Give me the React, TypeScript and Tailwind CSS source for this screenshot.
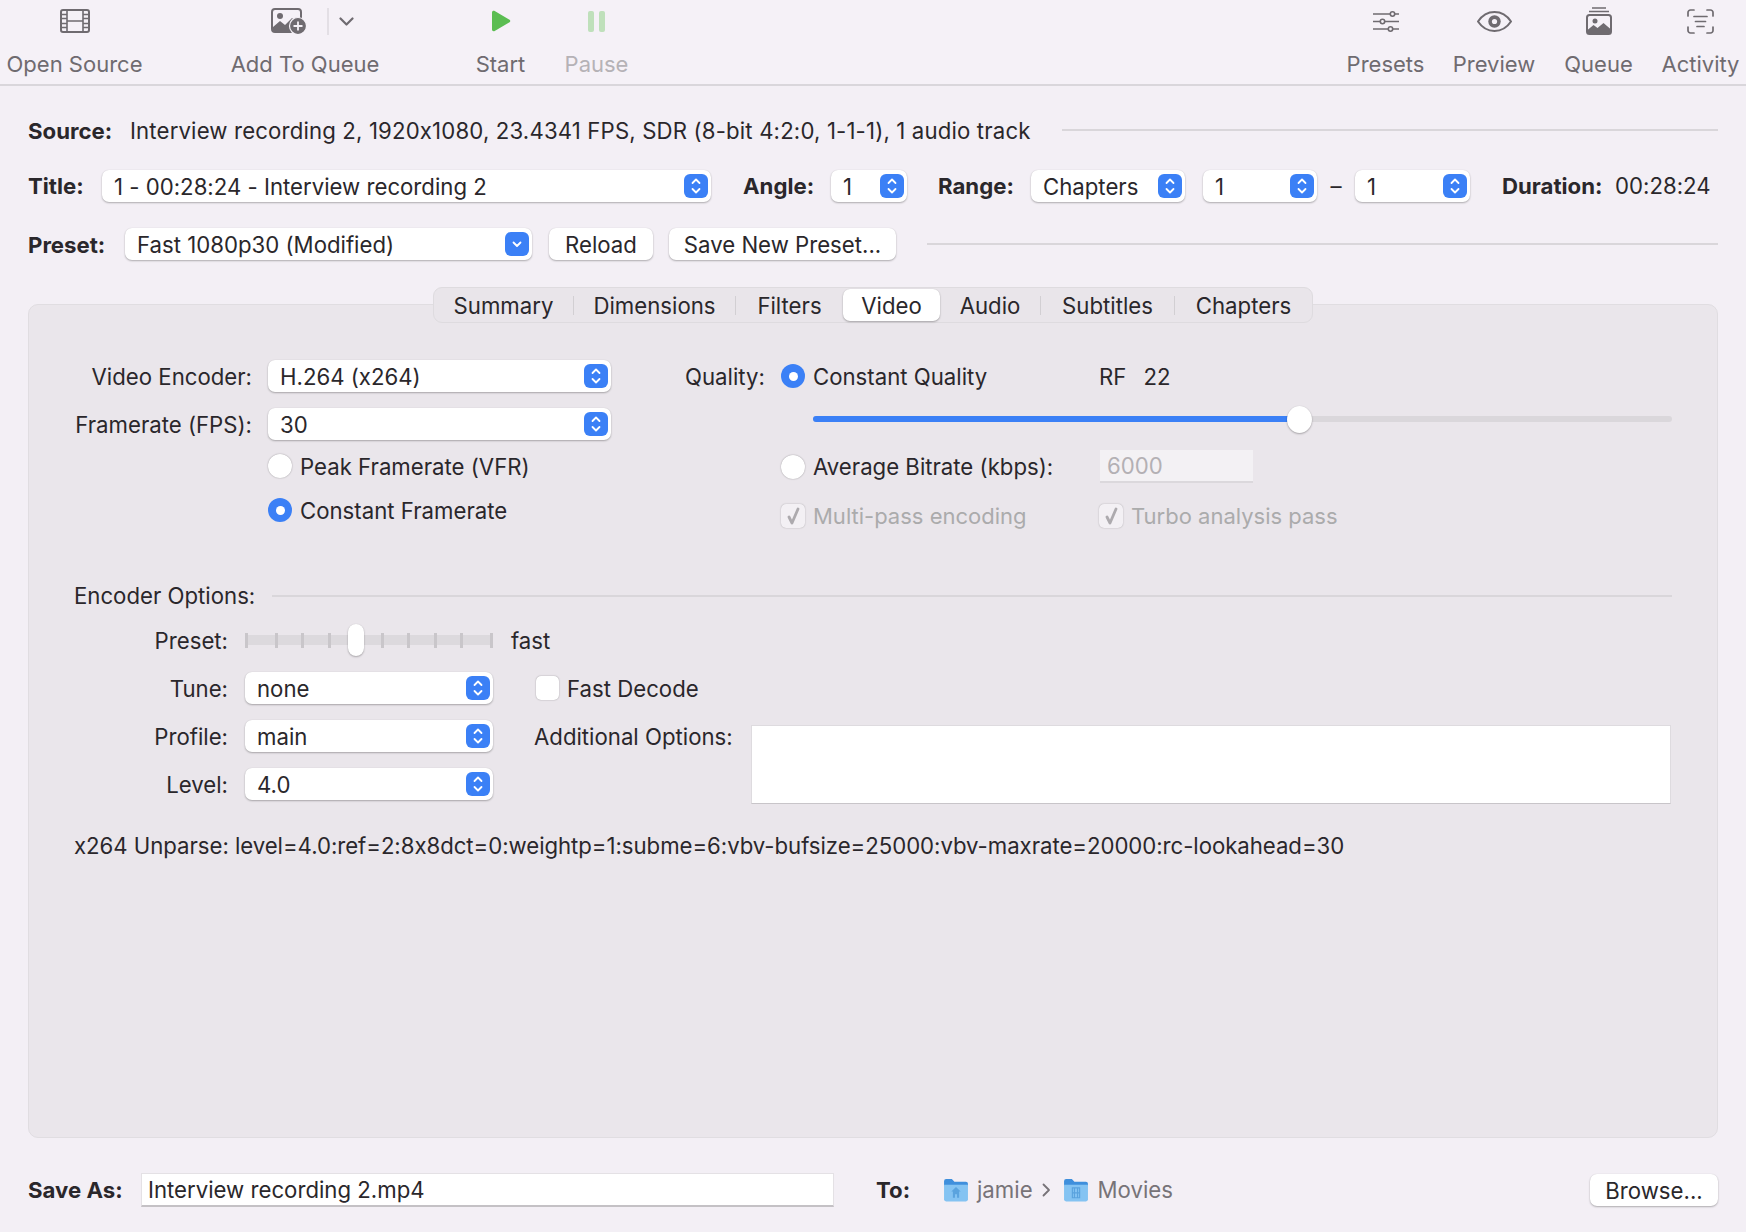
import type { ReactNode } from 'react'

const ICON = '#6f6b70'

// ── Toolbar icons ─────────────────────────────────────────────────────────────

function FilmIcon() {
  return (
    <svg width="30" height="24" viewBox="0 0 30 24" fill="none" stroke={ICON} strokeWidth="1.6">
      <rect x="1" y="1" width="28" height="22" rx="2" strokeWidth="2" />
      <path d="M7 1v22M23 1v22M7 12h16M1 5.5h6M1 9.5h6M1 14.5h6M1 18.5h6M23 5.5h6M23 9.5h6M23 14.5h6M23 18.5h6" />
    </svg>
  )
}

function AddQueueIcon() {
  return (
    <svg width="36" height="27" viewBox="0 0 36 27" fill="none">
      <rect x="1" y="1" width="29" height="23" rx="3" stroke={ICON} strokeWidth="2" />
      <circle cx="9" cy="8" r="3" fill={ICON} />
      <path d="M2 23v-4l7-6 5 4 7-7 9 8v5z" fill={ICON} />
      <circle cx="27" cy="18" r="8.5" fill={ICON} stroke="#f5f1f7" strokeWidth="1.2" />
      <path d="M27 13.5v9M22.5 18h9" stroke="#f5f1f7" strokeWidth="1.8" />
    </svg>
  )
}

function SlidersIcon() {
  return (
    <svg width="26" height="21" viewBox="0 0 26 21" fill="none" stroke={ICON} strokeWidth="1.6">
      <path d="M0 3h17M22 3h4M0 10.5h7M12 10.5h14M0 18h15M20 18h6" />
      <circle cx="19.5" cy="3" r="2.2" />
      <circle cx="9.5" cy="10.5" r="2.2" />
      <circle cx="17.5" cy="18" r="2.2" />
    </svg>
  )
}

function EyeIcon() {
  return (
    <svg width="35" height="21" viewBox="0 0 35 21" fill="none">
      <path d="M1 10.5C5 4.5 11 1 17.5 1S30 4.5 34 10.5C30 16.5 24 20 17.5 20S5 16.5 1 10.5Z" stroke={ICON} strokeWidth="2" />
      <circle cx="17.5" cy="10.5" r="6.2" fill={ICON} />
      <circle cx="17.5" cy="10.5" r="2.6" fill="#f5f1f7" />
    </svg>
  )
}

function QueueIcon() {
  return (
    <svg width="26" height="28" viewBox="0 0 26 28" fill="none">
      <path d="M6 1h14M3 4.5h20" stroke={ICON} strokeWidth="1.5" />
      <rect x="1" y="8" width="24" height="19" rx="2.5" stroke={ICON} strokeWidth="2" />
      <circle cx="9" cy="14" r="2.5" fill={ICON} />
      <path d="M1.5 26v-3l6-5 4 3 6-5 7 6v4z" fill={ICON} />
    </svg>
  )
}

function ActivityIcon() {
  return (
    <svg width="27" height="25" viewBox="0 0 27 25" fill="none" stroke={ICON} strokeWidth="1.7" strokeLinecap="round">
      <path d="M7 1H3.5A2.5 2.5 0 0 0 1 3.5V7M20 1h3.500A2.500 2.500 0 0 1 26 3.500V7M1 18v3.500A2.500 2.500 0 0 0 3.500 24H7M26 18v3.500a2.500 2.500 0 0 1-2.500 2.500H20" />
      <path d="M7 7.500h13M8.500 12.500h10M10 17.500h7" />
    </svg>
  )
}

function FolderIcon({ movies }: { movies?: boolean }) {
  return (
    <svg width="26" height="24" viewBox="0 0 25 23">
      <path d="M1 3a2 2 0 0 1 2-2h5.500l2.500 2.500h11a2 2 0 0 1 2 2V8H1z" fill="#3f8fdc" />
      <path d="M1 6.500h23v14a2 2 0 0 1-2 2H3a2 2 0 0 1-2-2z" fill="#84c3f2" />
      {movies ? (
        <path d="M9 9.500h7v9.500H9zM9 14.200h7M11 9.500v9.500M14 9.500v9.500" fill="none" stroke="#5aa3de" strokeWidth="1.100" />
      ) : (
        <path d="M12.500 8.500 8 13h1.500v6h6v-6H17zM11.500 19v-3.500h2V19" fill="#5aa3de" />
      )}
    </svg>
  )
}

// ── Toolbar ───────────────────────────────────────────────────────────────────

function ToolItem({ label, width, className, dim, children }: {
  label:      string
  width:      string
  className?: string
  dim?:       boolean
  children:   ReactNode
}) {
  return (
    <div className={`flex flex-col items-center ${width} ${className ?? ''}`}>
      <div className="flex h-[42px] items-center">{children}</div>
      <span className={`mt-[8px] whitespace-nowrap text-[22px] leading-[28px] ${dim ? 'text-[#b5b2b6]' : 'text-[#6f6b70]'}`}>
        {label}
      </span>
    </div>
  )
}

function Toolbar() {
  return (
    <div className="flex h-[86px] items-start border-b-2 border-[#d9d6db] bg-[#f5f1f7] pr-[7px]">
      <ToolItem label="Open Source" width="w-[135px]" className="ml-[7px]"><FilmIcon /></ToolItem>
      <ToolItem label="Add To Queue" width="w-[146px]" className="ml-[90px]">
        <div className="ml-[14px] flex items-center">
          <AddQueueIcon />
          <div className="ml-[20px] h-[27px] w-[2px] bg-[#e3dfe5]" />
          <svg className="ml-[10px] mt-[1px]" width="15" height="9" viewBox="0 0 15 9" fill="none" stroke={ICON} strokeWidth="2.200" strokeLinecap="round" strokeLinejoin="round">
            <path d="M1.500 1.500 7.500 7.500 13.500 1.500" />
          </svg>
        </div>
      </ToolItem>
      <ToolItem label="Start" width="w-[51px]" className="ml-[97px]">
        <svg width="20" height="22" viewBox="0 0 20 22"><path d="M1 2.500C1 1 2.500.4 3.700 1.100L18.500 9.700c1 .6 1 2 0 2.600L3.700 20.900C2.500 21.600 1 21 1 19.500z" fill="#5bbd52" /></svg>
      </ToolItem>
      <ToolItem label="Pause" width="w-[63px]" className="ml-[39px]" dim>
        <div className="flex gap-[5px]">
          <div className="h-[21px] w-[6px] rounded-[2px] bg-[#bfe0bb]" />
          <div className="h-[21px] w-[6px] rounded-[2px] bg-[#bfe0bb]" />
        </div>
      </ToolItem>
      <div className="flex-1" />
      <ToolItem label="Presets" width="w-[77px]"><SlidersIcon /></ToolItem>
      <ToolItem label="Preview" width="w-[82px]" className="ml-[29px]"><EyeIcon /></ToolItem>
      <ToolItem label="Queue" width="w-[67px]" className="ml-[30px]"><QueueIcon /></ToolItem>
      <ToolItem label="Activity" width="w-[77px]" className="ml-[30px]"><ActivityIcon /></ToolItem>
    </div>
  )
}

// ── Controls ──────────────────────────────────────────────────────────────────

const raised = 'bg-white shadow-[0_1px_2px_rgba(0,0,0,0.28),0_0_1px_rgba(0,0,0,0.12)]'

function Popup({ value, width, single, className }: { value: string; width: string; single?: boolean; className?: string }) {
  return (
    <div className={`flex h-[32px] shrink-0 items-center justify-between rounded-[7px] pl-[12px] pr-[3px] ${raised} ${width} ${className ?? ''}`}>
      <span className="whitespace-nowrap pt-[2px]">{value}</span>
      <span className="flex h-[24px] w-[24px] items-center justify-center rounded-[6px] bg-[#3b80f6]">
        <svg width="10" height="18" viewBox="0 0 10 18" fill="none" stroke="white" strokeWidth="1.800" strokeLinecap="round" strokeLinejoin="round">
          {single
            ? <path d="M1.500 7.500 5 11l3.500-3.500" />
            : <path d="M1.500 6 5 2.500 8.500 6M1.500 12 5 15.500 8.500 12" />}
        </svg>
      </span>
    </div>
  )
}

function Button({ label, width, className }: { label: string; width: string; className?: string }) {
  return (
    <div className={`flex h-[32px] shrink-0 items-center justify-center rounded-[7px] pt-[2px] ${raised} ${width} ${className ?? ''}`}>
      {label}
    </div>
  )
}

function Radio({ checked }: { checked?: boolean }) {
  return checked ? (
    <span className="flex h-[24px] w-[24px] shrink-0 items-center justify-center rounded-full bg-[#3b80f6]">
      <span className="h-[9px] w-[9px] rounded-full bg-white" />
    </span>
  ) : (
    <span className="block h-[24px] w-[24px] shrink-0 rounded-full bg-white shadow-[0_0_1.500px_rgba(0,0,0,0.4)]" />
  )
}

function DisabledCheck({ label, width }: { label: string; width: string }) {
  return (
    <div className={`flex h-[24px] items-center text-[22px] text-[#ababac] ${width}`}>
      <span className="flex h-[24px] w-[24px] shrink-0 items-center justify-center rounded-[5px] bg-[#f3f0f4] shadow-[0_0_1.500px_rgba(0,0,0,0.3)]">
        <svg width="15" height="18" viewBox="0 0 15 18" fill="none" stroke="#adaaae" strokeWidth="2.800" strokeLinecap="round" strokeLinejoin="round">
          <path d="M3 10l3 6L12 2" />
        </svg>
      </span>
      <span className="ml-[8px] whitespace-nowrap">{label}</span>
    </div>
  )
}

function Rule({ className }: { className?: string }) {
  return <div className={`h-[2px] flex-1 bg-[#d9d6da] ${className ?? ''}`} />
}

function Field({ label, children, className }: { label: string; children: ReactNode; className?: string }) {
  return (
    <div className={`flex h-[32px] items-center ${className ?? ''}`}>
      <span className="w-[154px] pt-[2px] text-right">{label}</span>
      <div className="ml-[17px]">{children}</div>
    </div>
  )
}

// ── Video tab ─────────────────────────────────────────────────────────────────

const TABS = [
  { name: 'Summary', width: 'w-[139px]' },
  { name: 'Dimensions', width: 'w-[161px]' },
  { name: 'Filters', width: 'w-[107px]' },
  { name: 'Video', width: 'w-[97px]', active: true },
  { name: 'Audio', width: 'w-[100px]' },
  { name: 'Subtitles', width: 'w-[133px]' },
  { name: 'Chapters', width: 'w-[137px]' },
]

function Tabs() {
  return (
    <div className="relative z-10 mt-[27px] flex justify-center">
      <div className="flex h-[36px] items-center rounded-[9px] border border-[#dedbdf] bg-[#e9e5ea]">
        {TABS.map((t, i) => (
          <div key={t.name} className="flex items-center">
            <div className={`flex h-[32px] items-center justify-center pt-[2px] ${t.width} ${t.active ? `rounded-[7px] ${raised}` : ''}`}>
              {t.name}
            </div>
            {i !== 6 && i !== 2 && i !== 3 && <div className="h-[19px] w-px bg-[#d2cfd3]" />}
          </div>
        ))}
      </div>
    </div>
  )
}

function PresetSlider() {
  const ticks = Array.from({ length: 8 })
  return (
    <div className="relative flex h-[32px] w-[248px] items-center">
      <div className="absolute inset-x-0 h-[10px] bg-[#dcd9dd]" />
      <div className="relative flex w-full justify-between">
        <div className="h-[15px] w-[3px] bg-[#c9c6ca]" />
        <div className="flex w-[188px] justify-between">
          {ticks.map((_, i) => <div key={i} className="h-[15px] w-[3px] bg-[#c9c6ca]" />)}
        </div>
        <div className="h-[15px] w-[3px] bg-[#c9c6ca]" />
      </div>
      <div className={`absolute left-[103px] h-[32px] w-[16px] rounded-full ${raised}`} />
    </div>
  )
}

function VideoTab() {
  return (
    <div className="-mt-[19px] h-[834px] rounded-[10px] border border-[#e0dde1] bg-[#eae6eb] pl-[45px] pt-[55px]">
      {/* Top section: framerate on the left, quality on the right */}
      <div className="flex h-[224px]">
        <div className="w-[537px]">
          <div className="flex h-[32px] items-center">
            <span className="w-[178px] whitespace-nowrap pt-[2px] text-right">Video Encoder:</span>
            <Popup value="H.264 (x264)" width="w-[343px]" className="ml-[16px]" />
          </div>
          <div className="mt-[16px] flex h-[32px] items-center">
            <span className="w-[178px] whitespace-nowrap pt-[2px] text-right">Framerate (FPS):</span>
            <Popup value="30" width="w-[343px]" className="ml-[16px]" />
          </div>
          <div className="ml-[194px] mt-[14px] flex h-[24px] items-center">
            <Radio />
            <span className="ml-[8px] pt-[2px]">Peak Framerate (VFR)</span>
          </div>
          <div className="ml-[194px] mt-[20px] flex h-[24px] items-center">
            <Radio checked />
            <span className="ml-[8px] pt-[2px]">Constant Framerate</span>
          </div>
        </div>
        <div className="ml-[74px] w-[987px]">
          <div className="flex h-[32px] items-center">
            <span className="w-[79px] pt-[2px]">Quality:</span>
            <span className="ml-[17px]"><Radio checked /></span>
            <span className="ml-[8px] w-[286px] pt-[2px]">Constant Quality</span>
            <span className="pt-[2px]">RF</span>
            <span className="ml-[17px] pt-[2px]">22</span>
          </div>
          <div className="relative ml-[128px] mt-[13px] flex h-[28px] w-[859px] items-center">
            <div className="h-[6px] w-full overflow-hidden rounded-full bg-[#dad7db]">
              <div className="h-full bg-[#3b80f6]" style={{ width: '56.700%' }} />
            </div>
            <div className={`absolute left-[474px] h-[27px] w-[25px] rounded-[50%] ${raised}`} />
          </div>
          <div className="mt-[17px] flex h-[33px] items-center">
            <span className="ml-[96px]"><Radio /></span>
            <span className="ml-[8px] w-[287px] whitespace-nowrap">Average Bitrate (kbps):</span>
            <span className="flex h-[33px] w-[153px] items-center border-b-2 border-[#dbd8dc] bg-[#f3f1f4] pl-[7px] text-[#b3b0b4]">6000</span>
          </div>
          <div className="ml-[96px] mt-[21px] flex">
            <DisabledCheck label="Multi-pass encoding" width="w-[318px]" />
            <DisabledCheck label="Turbo analysis pass" width="w-[300px]" />
          </div>
        </div>
      </div>

      {/* Encoder options */}
      <div className="flex h-[24px] items-center">
        <span className="w-[198px] whitespace-nowrap">Encoder Options:</span>
        <Rule className="mr-[45px]" />
      </div>
      <Field label="Preset:" className="mt-[16px]">
        <div className="flex items-center">
          <PresetSlider />
          <span className="ml-[18px] pt-[2px]">fast</span>
        </div>
      </Field>
      <div className="mt-[16px] flex">
        <div className="flex flex-col gap-[16px]">
          <Field label="Tune:"><Popup value="none" width="w-[248px]" /></Field>
          <Field label="Profile:"><Popup value="main" width="w-[248px]" /></Field>
          <Field label="Level:"><Popup value="4.0" width="w-[248px]" /></Field>
        </div>
        <div className="ml-[41px]">
          <div className="flex h-[32px] items-center">
            <span className="ml-[2px] h-[24px] w-[23px] rounded-[5px] bg-white shadow-[0_0_1.500px_rgba(0,0,0,0.4)]" />
            <span className="ml-[8px] pt-[2px]">Fast Decode</span>
          </div>
          <div className="mt-[21px] flex items-start">
            <span className="mt-[2px] flex h-[20px] w-[199px] items-center whitespace-nowrap">Additional Options:</span>
            <div className="ml-[18px] h-[79px] w-[920px] border border-[#dedbdf] border-b-[#c8c5c9] bg-white" />
          </div>
        </div>
      </div>
      <div className="mt-[30px] flex h-[24px] items-center whitespace-nowrap tracking-[-0.04px]">
        x264 Unparse: level=4.0:ref=2:8x8dct=0:weightp=1:subme=6:vbv-bufsize=25000:vbv-maxrate=20000:rc-lookahead=30
      </div>
    </div>
  )
}

// ── App ───────────────────────────────────────────────────────────────────────

export default function App() {
  return (
    <div className="h-[1232px] w-[1746px] overflow-hidden bg-[#f3eff5] font-['Inter',sans-serif] text-[22.200px] leading-[34px] text-[#2a272b] [font-feature-settings:'calt'_0]">
      <Toolbar />

      <div className="px-[28px]">
        {/* Source */}
        <div className="mt-[28px] flex h-[32px] items-center">
          <span className="w-[102px] pt-[2px] font-bold">Source:</span>
          <span className="w-[932px] whitespace-nowrap pt-[2px] tracking-[0.15px]">Interview recording 2, 1920x1080, 23.4341 FPS, SDR (8-bit 4:2:0, 1-1-1), 1 audio track</span>
          <Rule />
        </div>

        {/* Title */}
        <div className="mt-[24px] flex h-[32px] items-center">
          <span className="w-[74px] font-bold">Title:</span>
          <Popup value="1 - 00:28:24 - Interview recording 2" width="w-[609px]" />
          <span className="ml-[32px] w-[88px] font-bold">Angle:</span>
          <Popup value="1" width="w-[76px]" />
          <span className="ml-[31px] w-[93px] font-bold">Range:</span>
          <Popup value="Chapters" width="w-[154px]" />
          <Popup value="1" width="w-[114px]" className="ml-[18px]" />
          <span className="w-[38px] text-center">–</span>
          <Popup value="1" width="w-[115px]" />
          <span className="ml-[32px] w-[113px] font-bold">Duration:</span>
          <span>00:28:24</span>
        </div>

        {/* Preset */}
        <div className="mt-[26px] flex h-[32px] items-center">
          <span className="w-[97px] pt-[2px] font-bold">Preset:</span>
          <Popup value="Fast 1080p30 (Modified)" width="w-[407px]" single />
          <Button label="Reload" width="w-[104px]" className="ml-[17px]" />
          <Button label="Save New Preset..." width="w-[227px]" className="ml-[16px]" />
          <Rule className="ml-[31px]" />
        </div>

        <Tabs />
        <VideoTab />

        {/* Save As */}
        <div className="mt-[35px] flex h-[34px] items-center">
          <span className="w-[113px] whitespace-nowrap font-bold">Save As:</span>
          <div className="flex h-[34px] w-[693px] items-center border border-[#e4e1e5] border-b-2 border-b-[#c4c1c5] bg-white pl-[6px] pt-[1px]">
            Interview recording 2.mp4
          </div>
          <span className="ml-[42px] w-[67px] font-bold">To:</span>
          <div className="flex items-center text-[#777378]">
            <FolderIcon />
            <span className="ml-[8px]">jamie</span>
            <svg className="ml-[9px]" width="9" height="14" viewBox="0 0 9 14" fill="none" stroke="#777378" strokeWidth="1.800" strokeLinecap="round" strokeLinejoin="round">
              <path d="M1.500 1.500 7 7l-5.500 5.500" />
            </svg>
            <span className="ml-[12px]"><FolderIcon movies /></span>
            <span className="ml-[9px]">Movies</span>
          </div>
          <div className="flex-1" />
          <Button label="Browse..." width="w-[128px]" />
        </div>
      </div>
    </div>
  )
}
